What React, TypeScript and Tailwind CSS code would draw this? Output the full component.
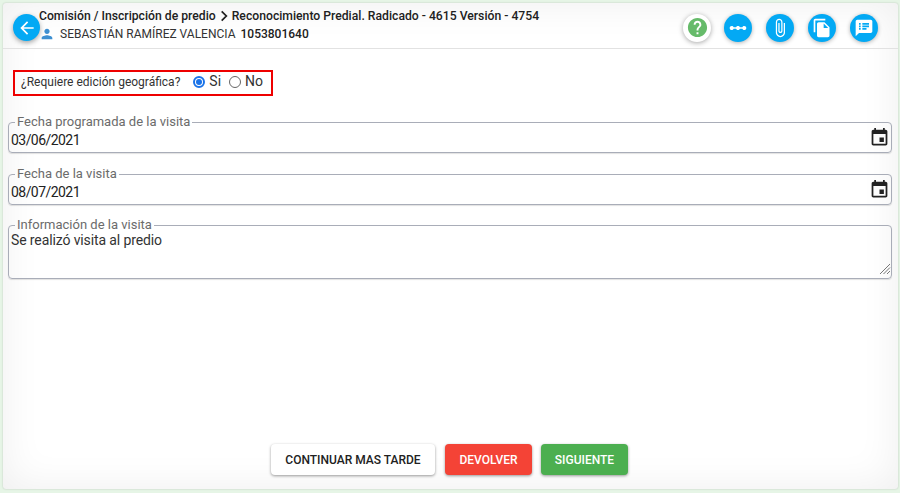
const P = ({ d, className }: { d: string; className?: string }) => (
  <svg viewBox="0 0 24 24" className={className} fill="currentColor"><path d={d} /></svg>
);

const icons = [
  "M19.5 9.5c-1.03 0-1.9.62-2.29 1.5h-2.92c-.39-.88-1.26-1.5-2.29-1.5s-1.9.62-2.29 1.5H6.79c-.39-.88-1.26-1.5-2.29-1.5C3.12 9.5 2 10.62 2 12s1.12 2.5 2.5 2.5c1.03 0 1.9-.62 2.29-1.5h2.92c.39.88 1.26 1.5 2.29 1.5s1.9-.62 2.29-1.5h2.92c.39.88 1.26 1.5 2.29 1.5 1.38 0 2.5-1.12 2.5-2.5s-1.12-2.5-2.5-2.5z",
  "M16.5 6v11.5c0 2.21-1.79 4-4 4s-4-1.79-4-4V5c0-1.38 1.12-2.5 2.5-2.5s2.5 1.12 2.5 2.5v10.5c0 .55-.45 1-1 1s-1-.45-1-1V6H10v9.5c0 1.38 1.12 2.5 2.5 2.5s2.5-1.12 2.5-2.5V5c0-2.21-1.79-4-4-4S7 2.79 7 5v12.5c0 3.04 2.46 5.5 5.5 5.5s5.5-2.46 5.5-5.5V6h-1.5z",
  "M16 1H4c-1.1 0-2 .9-2 2v14h2V3h12V1zm-1 4l6 6v10c0 1.1-.9 2-2 2H7.99C6.89 23 6 22.1 6 21l.01-14c0-1.1.89-2 1.99-2h7zm-1 7h5.5L14 6.5V12z",
  "M20 2H4c-1.1 0-1.99.9-1.99 2L2 22l4-4h14c1.1 0 2-.9 2-2V4c0-1.1-.9-2-2-2zM8 14H6v-2h2v2zm0-3H6V9h2v2zm0-3H6V6h2v2zm7 6h-5v-2h5v2zm3-3h-8V9h8v2zm0-3h-8V6h8v2z",
];
const cal = "M17 12h-5v5h5v-5zM16 1v2H8V1H6v2H5c-1.11 0-1.99.9-1.99 2L3 19c0 1.1.89 2 2 2h14c1.1 0 2-.9 2-2V5c0-1.1-.9-2-2-2h-1V1h-2zm3 18H5V8h14v11z";

const Field = ({ label, value }: { label: string; value: string }) => (
  <fieldset className="border border-[#a9adb8] rounded-[4px] h-[38px] pl-[2px] pr-[1px] flex items-center shadow-[0_1px_1px_rgba(0,0,0,0.12)]">
    <legend className="ml-[4px] px-[2px] text-[13px] leading-[14px] text-[#6b6b6b]">{label}</legend>
    <div className="flex items-center justify-between w-full mt-[1px]">
      <span className="text-[14px] tracking-[-0.55px] leading-[20px] text-[#222]">{value}</span>
      <P d={cal} className="w-[21px] h-[21px] text-[#222] -mt-[5px]" />
    </div>
  </fieldset>
);

export default function App() {
  return (
    <div className="w-[900px] h-[493px] bg-[#e6f5e6] pt-[3px] pl-[3px] pr-[2px] pb-[4px] text-[#333]" style={{ fontFamily: "Roboto, sans-serif" }}>
      <div className="h-full bg-white rounded-[3px] flex flex-col shadow-[inset_0_0_40px_rgba(0,0,0,0.07),0_0_2px_rgba(0,0,0,0.2)]">
        <header className="h-[46px] shrink-0 border-b border-[#e2e2e2] flex items-center justify-between pl-[10px] pr-[20px] pt-[4px]">
          <div className="flex items-center">
            <div className="w-[27px] h-[27px] rounded-full bg-[#03a9f4] text-white flex items-center justify-center shadow-[0_2px_5px_rgba(0,0,0,0.35)]">
              <P d="M20 11H7.83l5.59-5.59L12 4l-8 8 8 8 1.41-1.41L7.83 13H20v-2z" className="w-[20px] h-[20px]" />
            </div>
            <div className="ml-[-1px] -mt-[5px]">
              <div className="flex items-center text-[12.2px] leading-[18px] font-medium text-[#212121] whitespace-nowrap">
                <span>Comisión / Inscripción de predio</span>
                <svg viewBox="0 0 24 24" className="w-[14px] h-[14px] mx-[1px]" fill="none" stroke="#212121" strokeWidth="3"><path d="M8 4l8 8-8 8" /></svg>
                <span>Reconocimiento Predial. Radicado - 4615 Versión - 4754</span>
              </div>
              <div className="flex items-center text-[12px] leading-[18px] whitespace-nowrap">
                <P d="M12 12c2.21 0 4-1.79 4-4s-1.79-4-4-4-4 1.79-4 4 1.79 4 4 4zm0 2c-2.67 0-8 1.34-8 4v2h16v-2c0-2.66-5.33-4-8-4z" className="w-[16px] h-[16px] text-[#3d8fd1] mr-[5px]" />
                <span className="text-[#333]">SEBASTIÁN RAMÍREZ VALENCIA</span>
                <span className="ml-[5px] font-medium text-[#212121]">1053801640</span>
              </div>
            </div>
          </div>
          <div className="flex items-center gap-[14px]">
            <div className="w-[28px] h-[28px] rounded-full bg-white flex items-center justify-center shadow-[0_1px_5px_rgba(0,0,0,0.35)] -mr-[1px]">
              <P d="M12 2C6.48 2 2 6.48 2 12s4.48 10 10 10 10-4.48 10-10S17.52 2 12 2zm1 17h-2v-2h2v2zm2.07-7.75l-.9.92C13.45 12.9 13 13.5 13 15h-2v-.5c0-1.1.45-2.1 1.17-2.83l1.24-1.26c.37-.36.59-.86.59-1.41 0-1.1-.9-2-2-2s-2 .9-2 2H8c0-2.21 1.79-4 4-4s4 1.79 4 4c0 .88-.36 1.68-.93 2.25z" className="w-[23px] h-[23px] text-[#66bb6a]" />
            </div>
            {icons.map((d, i) => (
              <div key={i} className="w-[28px] h-[28px] rounded-full bg-[#03a9f4] text-white flex items-center justify-center shadow-[0_1px_4px_rgba(0,0,0,0.3)]">
                <P d={d} className="w-[20px] h-[20px]" />
              </div>
            ))}
          </div>
        </header>

        <main className="flex-1 flex flex-col px-[5px]">
          <div className="mt-[21px] ml-[5px] w-[260px] h-[26px] border-2 border-[#ee0000] flex items-center pl-[6px] pb-[3px] text-[12px] text-[#333]">
            <span>¿Requiere edición geográfica?</span>
            <span className="ml-[13px] w-[12px] h-[12px] rounded-full border-2 border-[#1a73e8] flex items-center justify-center">
              <span className="w-[6px] h-[6px] rounded-full bg-[#1a73e8]" />
            </span>
            <span className="ml-[4px] text-[14px]">Si</span>
            <span className="ml-[8px] w-[12px] h-[12px] rounded-full border border-[#666]" />
            <span className="ml-[4px] text-[14px]">No</span>
          </div>

          <div className="mt-[19px] flex flex-col gap-[14px] mr-[1px]">
            <Field label="Fecha programada de la visita" value="03/06/2021" />
            <Field label="Fecha de la visita" value="08/07/2021" />
            <fieldset className="border border-[#a9adb8] rounded-[4px] h-[61px] pl-[2px] -mt-[1px] shadow-[0_1px_1px_rgba(0,0,0,0.12)]">
              <legend className="ml-[4px] px-[2px] text-[13px] leading-[14px] text-[#6b6b6b]">Información de la visita</legend>
              <div className="relative h-[44px] text-[14px] tracking-[-0.12px] leading-[18px] text-[#333] -mt-[1px]">
                Se realizó visita al predio
                <svg viewBox="0 0 12 12" className="absolute right-0 bottom-0 w-[12px] h-[12px]" stroke="#777" strokeWidth="1"><path d="M11 1L1 11M11 4.5L4.5 11M11 8l-3 3" /></svg>
              </div>
            </fieldset>
          </div>

          <div className="mt-auto mb-[14px] flex justify-center pr-[2px]">
            <button className="w-[164px] h-[31px] rounded-[4px] bg-white text-[#212121] text-[12px] font-medium shadow-[0_1px_3px_rgba(0,0,0,0.4)]">CONTINUAR MAS TARDE</button>
            <button className="ml-[10px] w-[87px] h-[31px] rounded-[4px] bg-[#f44336] text-white text-[12px] font-medium shadow-[0_1px_3px_rgba(0,0,0,0.4)]">DEVOLVER</button>
            <button className="ml-[9px] w-[87px] h-[31px] rounded-[4px] bg-[#4caf50] text-white text-[12px] font-medium shadow-[0_1px_3px_rgba(0,0,0,0.4)]">SIGUIENTE</button>
          </div>
        </main>
      </div>
    </div>
  );
}
